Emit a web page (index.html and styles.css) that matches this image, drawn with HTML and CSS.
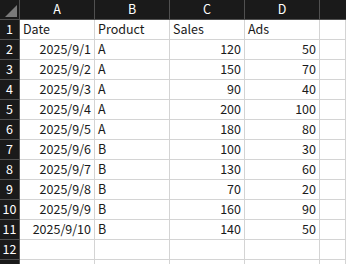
FILE: index.html
```html
<!DOCTYPE html>
<html>
<head>
<meta charset="utf-8">
<link rel="stylesheet" href="styles.css">
</head>
<body>
<div class="sheet">
  <div class="hd corner"><span class="tri"></span></div>
  <div class="hd col">A</div><div class="hd col">B</div><div class="hd col">C</div><div class="hd col">D</div><div class="hd col last"></div>

  <div class="hd row">1</div><div class="c">Date</div><div class="c">Product</div><div class="c">Sales</div><div class="c">Ads</div><div class="c"></div>
  <div class="hd row">2</div><div class="c r">2025/9/1</div><div class="c">A</div><div class="c r">120</div><div class="c r">50</div><div class="c"></div>
  <div class="hd row">3</div><div class="c r">2025/9/2</div><div class="c">A</div><div class="c r">150</div><div class="c r">70</div><div class="c"></div>
  <div class="hd row">4</div><div class="c r">2025/9/3</div><div class="c">A</div><div class="c r">90</div><div class="c r">40</div><div class="c"></div>
  <div class="hd row">5</div><div class="c r">2025/9/4</div><div class="c">A</div><div class="c r">200</div><div class="c r">100</div><div class="c"></div>
  <div class="hd row">6</div><div class="c r">2025/9/5</div><div class="c">A</div><div class="c r">180</div><div class="c r">80</div><div class="c"></div>
  <div class="hd row">7</div><div class="c r">2025/9/6</div><div class="c">B</div><div class="c r">100</div><div class="c r">30</div><div class="c"></div>
  <div class="hd row">8</div><div class="c r">2025/9/7</div><div class="c">B</div><div class="c r">130</div><div class="c r">60</div><div class="c"></div>
  <div class="hd row">9</div><div class="c r">2025/9/8</div><div class="c">B</div><div class="c r">70</div><div class="c r">20</div><div class="c"></div>
  <div class="hd row">10</div><div class="c r">2025/9/9</div><div class="c">B</div><div class="c r">160</div><div class="c r">90</div><div class="c"></div>
  <div class="hd row">11</div><div class="c r">2025/9/10</div><div class="c">B</div><div class="c r">140</div><div class="c r">50</div><div class="c"></div>
  <div class="hd row">12</div><div class="c"></div><div class="c"></div><div class="c"></div><div class="c"></div><div class="c"></div>
  <div class="hd row"></div><div class="c"></div><div class="c"></div><div class="c"></div><div class="c"></div><div class="c"></div>
</div>
</body>
</html>
```
FILE: styles.css
```css
html, body {
  margin: 0;
  padding: 0;
  background: #ffffff;
  overflow: hidden;
}
.sheet {
  display: grid;
  grid-template-columns: 20px 75px 75px 75px 75px 1fr;
  grid-auto-rows: 20px;
  width: 346px;
  font-family: "Noto Sans CJK JP", "Noto Sans", sans-serif;
  font-size: 12.5px;
  color: #1a1a1a;
}
.hd {
  background: #1a1a1a;
  color: #ffffff;
  box-sizing: border-box;
  display: flex;
  align-items: center;
  justify-content: center;
  line-height: 1;
}
.col {
  border-right: 1px solid #505050;
  border-bottom: 1px solid #505050;
}
.col.last {
  border-right: none;
}
.row {
  border-right: 1px solid #505050;
  border-bottom: 1px solid #505050;
}
.corner {
  border-right: 1px solid #505050;
  border-bottom: 1px solid #505050;
  position: relative;
}
.tri {
  position: absolute;
  right: 2px;
  bottom: 2px;
  width: 0;
  height: 0;
  border-left: 12px solid transparent;
  border-bottom: 12px solid #7a7a7a;
}
.c {
  box-sizing: border-box;
  border-right: 1px solid #d4d4d4;
  border-bottom: 1px solid #d4d4d4;
  display: flex;
  align-items: center;
  padding: 0 3px;
  white-space: nowrap;
  line-height: 1;
}
.r {
  justify-content: flex-end;
}
```
